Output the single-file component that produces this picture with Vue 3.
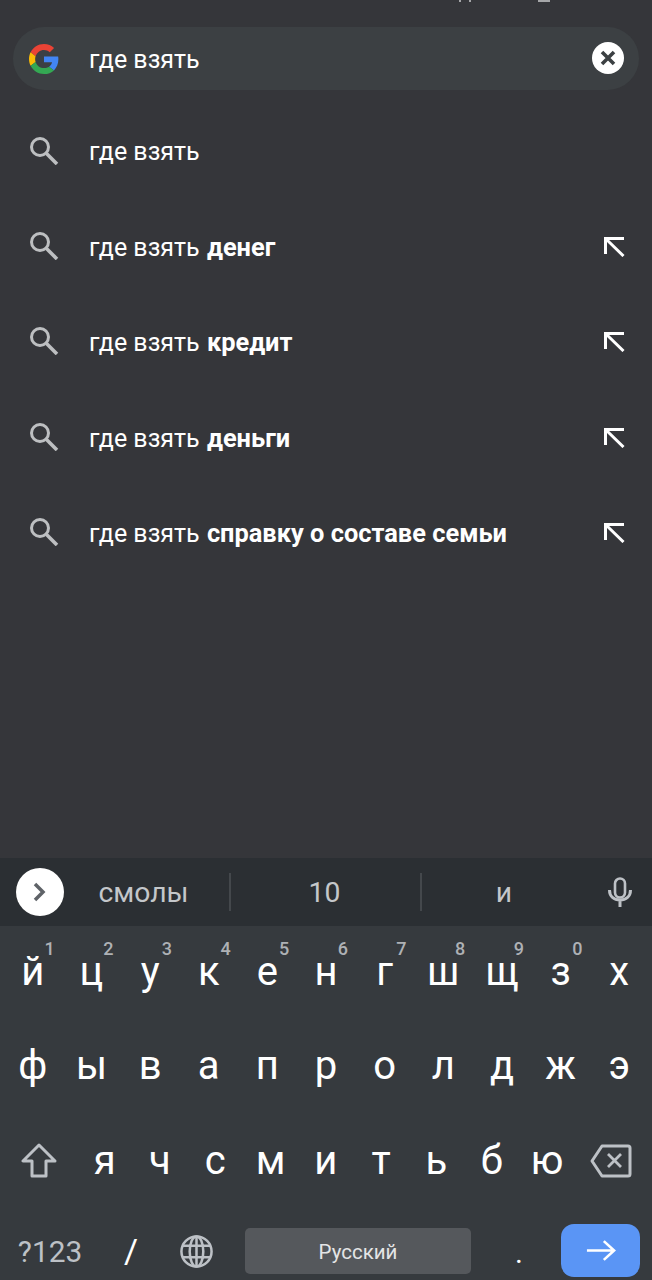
<template>
  <div class="screen">
    <div class="status">
      <span class="mark mark-a"></span>
      <span class="mark mark-b"></span>
    </div>

    <div class="search-bar">
      <svg class="g-logo" viewBox="0 0 48 48" width="30" height="30">
        <path fill="#EA4335" d="M24 9.500c3.500 0 6.700 1.200 9.200 3.600l6.900-6.900C35.900 2.400 30.500 0 24 0 14.600 0 6.500 5.400 2.600 13.200l8 6.200C12.500 13.600 17.800 9.500 24 9.500z"/>
        <path fill="#4285F4" d="M47 24.500c0-1.600-.1-3.100-.4-4.500H24v9h12.900c-.6 3-2.200 5.500-4.700 7.200l7.700 6C44.400 38 47 31.800 47 24.500z"/>
        <path fill="#FBBC05" d="M10.500 28.600C10 27.200 9.800 25.600 9.800 24s.2-3.200.7-4.600l-8-6.200C.9 16.500 0 20.100 0 24s.9 7.500 2.600 10.800l7.900-6.200z"/>
        <path fill="#34A853" d="M24 48c6.500 0 11.900-2.100 15.900-5.800l-7.700-6c-2.200 1.500-4.900 2.300-8.200 2.300-6.200 0-11.500-4.100-13.400-9.900l-8 6.200C6.500 42.600 14.600 48 24 48z"/>
      </svg>
      <span class="query">где взять</span>
      <svg class="clear" viewBox="0 0 32 32" width="32" height="32">
        <circle cx="16" cy="16" r="16" fill="#fff"/>
        <path d="M10 10l12 12M22 10L10 22" stroke="#3c4043" stroke-width="3.600" fill="none"/>
      </svg>
    </div>

    <div class="suggestions">
      <div v-for="(s, i) in suggestions" :key="i" class="row">
        <svg class="lens" viewBox="0 0 30 30" width="30" height="30">
          <circle cx="11" cy="12" r="8.500" fill="none" stroke="#bdbfc1" stroke-width="3"/>
          <path d="M17.500 18.500L28 29" stroke="#bdbfc1" stroke-width="3.600" fill="none"/>
        </svg>
        <span class="row-text">где взять <b v-if="s">{{ s }}</b></span>
        <svg v-if="s" class="fill-arrow" viewBox="0 0 24 24" width="24" height="24">
          <path d="M2 5.500h20M3.500 4v17M4 6l17.500 17" stroke="#fff" stroke-width="3" fill="none"/>
        </svg>
      </div>
    </div>

    <div class="spacer"></div>

    <div class="strip">
      <div class="strip-btn">
        <svg viewBox="0 0 48 48" width="48" height="48">
          <circle cx="24" cy="24" r="24" fill="#fff"/>
          <path d="M19 16l8 8-8 8" stroke="#5f6368" stroke-width="3.500" fill="none"/>
        </svg>
      </div>
      <span class="word word-a">смолы</span>
      <i class="sep"></i>
      <span class="word word-b">10</span>
      <i class="sep"></i>
      <span class="word word-c">и</span>
      <svg class="mic" viewBox="0 0 24 30" width="24" height="30">
        <rect x="7" y="1.500" width="10" height="19" rx="5" fill="none" stroke="#bdc1c6" stroke-width="2.600"/>
        <path d="M1.500 13c0 6.500 4.500 10 10.500 10s10.500-3.500 10.500-10M12 23v7" fill="none" stroke="#bdc1c6" stroke-width="3"/>
      </svg>
    </div>

    <div class="keyboard">
      <div class="key-row row-top">
        <span v-for="(k, i) in row1" :key="k" class="key">
          {{ k }}<sup v-if="i < 10" class="digit">{{ (i + 1) % 10 }}</sup>
        </span>
      </div>
      <div class="key-row row-mid">
        <span v-for="k in row2" :key="k" class="key">{{ k }}</span>
      </div>
      <div class="key-row row-low">
        <span class="shift">
          <svg viewBox="0 0 36 36" width="36" height="36">
            <path d="M18 2L2 18h9v15h14V18h9z" fill="none" stroke="#bdc1c6" stroke-width="3" stroke-linejoin="round"/>
          </svg>
        </span>
        <span v-for="k in row3" :key="k" class="key">{{ k }}</span>
        <span class="backspace">
          <svg viewBox="0 0 42 34" width="42" height="34">
            <path d="M12 2h26a2 2 0 0 1 2 2v26a2 2 0 0 1-2 2H12L2 17z" fill="none" stroke="#bdc1c6" stroke-width="3" stroke-linejoin="round"/>
            <path d="M18 10l13 13M31 10L18 23" stroke="#bdc1c6" stroke-width="2.800" fill="none"/>
          </svg>
        </span>
      </div>
      <div class="key-row row-bottom">
        <span class="cell sym">?123</span>
        <span class="cell slash">/</span>
        <span class="cell globe">
          <svg viewBox="0 0 36 36" width="35" height="35">
            <g fill="none" stroke="#bdc1c6" stroke-width="2.600">
              <circle cx="18" cy="18" r="15.500"/>
              <ellipse cx="18" cy="18" rx="7" ry="15.500"/>
              <path d="M4 12h28M4 24h28M18 3v30"/>
            </g>
          </svg>
        </span>
        <span class="space">Русский</span>
        <span class="cell dot">.</span>
        <span class="go">
          <svg viewBox="0 0 32 24" width="30" height="23">
            <path d="M1 12h29M19 2l11 10-11 10" fill="none" stroke="#fff" stroke-width="2.800"/>
          </svg>
        </span>
      </div>
    </div>
  </div>
</template>

<script setup>
const suggestions = ['', 'денег', 'кредит', 'деньги', 'справку о составе семьи']
const row1 = ['й', 'ц', 'у', 'к', 'е', 'н', 'г', 'ш', 'щ', 'з', 'х']
const row2 = ['ф', 'ы', 'в', 'а', 'п', 'р', 'о', 'л', 'д', 'ж', 'э']
const row3 = ['я', 'ч', 'с', 'м', 'и', 'т', 'ь', 'б', 'ю']
</script>

<style>
html, body {
  margin: 0;
  background: #35363a;
}
</style>

<style scoped>
.screen {
  width: 652px;
  height: 1280px;
  overflow: hidden;
  display: flex;
  flex-direction: column;
  background: #35363a;
  font-family: Roboto, "Noto Sans", sans-serif;
  color: #fff;
}

.status {
  height: 27px;
  flex: none;
  position: relative;
}

.mark {
  position: absolute;
  top: 0;
  height: 2px;
}
.mark-a {
  left: 459px;
  width: 8px;
  border-left: 2px solid #a5a6a8;
  border-right: 2px solid #a5a6a8;
}
.mark-b { left: 538px; width: 12px; background: #a5a6a8; }

.search-bar {
  flex: none;
  height: 63px;
  margin: 0 13px;
  border-radius: 32px;
  background: #3c4043;
  display: flex;
  align-items: center;
  padding: 0 15px 0 16px;
}

.g-logo { flex: none; margin-right: 30px; }
.query {
  flex: 1;
  font-size: 25px;
  padding-top: 2px;
}
.clear { flex: none; margin-top: -1px; }

.suggestions {
  flex: none;
  padding-top: 14px;
}

.row {
  height: 95.400px;
  display: flex;
  align-items: center;
  padding: 0 26px 0 29px;
}

.lens { flex: none; margin-right: 30px; margin-top: -4px; }
.row-text {
  flex: 1;
  font-size: 25px;
  white-space: nowrap;
}
.row-text b { font-weight: 700; font-size: 25.400px; margin-left: 1px; }
.fill-arrow { flex: none; margin-top: -4px; }

.spacer { flex: 1; }

.strip {
  flex: none;
  height: 68px;
  background: #2b2f33;
  display: flex;
  align-items: center;
  padding-left: 16px;
}

.strip-btn { width: 48px; height: 48px; flex: none; }
.word {
  flex: none;
  text-align: center;
  font-size: 28.300px;
  color: #c4c7ca;
}
.word-a { width: 159px; padding-right: 6px; }
.word-b { width: 187px; padding-right: 2px; }
.word-c { width: 164px; }
.sep {
  width: 2px;
  height: 38px;
  background: #44484c;
  flex: none;
}
.mic { flex: none; margin-left: 22px; }

.keyboard {
  flex: none;
  height: 354px;
  background: #363a3e;
  display: flex;
  flex-direction: column;
}

.key-row {
  display: flex;
  align-items: center;
}
.row-top { height: 92px; padding: 0 3.500px; }
.row-mid { height: 95px; padding: 0 3.500px; }
.row-low { height: 96px; }
.row-bottom { height: 71px; padding-top: 13px; box-sizing: border-box; }

.key {
  flex: 1;
  text-align: center;
  font-size: 40px;
  position: relative;
  line-height: 44px;
}

.digit {
  position: absolute;
  top: -11px;
  left: 41px;
  font-size: 18px;
  line-height: 20px;
  font-weight: 500;
  color: #aeb1b5;
  vertical-align: baseline;
}

.row-low .key { flex: 0 0 55.300px; }
.shift { flex: none; display: flex; margin: 0 20px 0 21px; }
.backspace { flex: none; display: flex; margin-left: 15px; }

.cell {
  flex: none;
  text-align: center;
  display: flex;
  justify-content: center;
}
.sym { width: 100px; font-size: 29.800px; color: #bdc1c6; }
.slash { width: 62px; font-size: 34px; }
.globe { width: 68px; }
.space {
  flex: none;
  width: 226px;
  height: 46px;
  margin-left: 15px;
  border-radius: 5px;
  background: #55585c;
  display: flex;
  align-items: center;
  justify-content: center;
  font-size: 20.500px;
  padding-top: 1px;
  box-sizing: border-box;
  color: #e4e5e6;
}
.dot { width: 90px; font-size: 30px; padding: 3px 0 0 6px; box-sizing: border-box; }
.go {
  flex: none;
  width: 79px;
  height: 53px;
  margin-top: -2px;
  border-radius: 13px;
  background: #5a95f5;
  display: flex;
  align-items: center;
  justify-content: center;
}
</style>
